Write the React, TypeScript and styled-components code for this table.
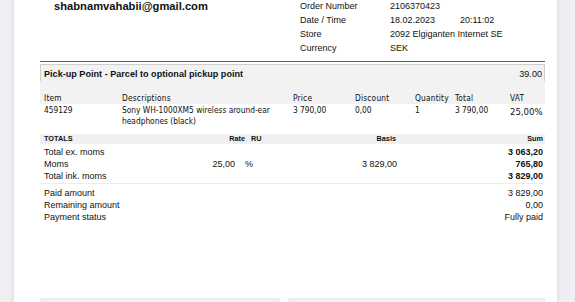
import React from "react";
import styled, { createGlobalStyle } from "styled-components";

const Global = createGlobalStyle`
  html, body { margin: 0; padding: 0; }
  body {
    background: #efeff3;
    font-family: "Liberation Sans", Arial, sans-serif;
    color: #111;
    overflow: hidden;
    height: 302px;
  }
`;

const Page = styled.div`
  margin-left: 14px;
  width: 543px;
  height: 302px;
  background: #fff;
  box-shadow: 0 0 5px rgba(0, 0, 0, 0.12);
  padding: 0 12px 0 26px;
  box-sizing: border-box;
  overflow: hidden;
`;

const Header = styled.div`
  display: flex;
  margin-top: -1px;
  padding-bottom: 6px;
  border-bottom: 1px solid #5e5e5e;
`;

const EmailCol = styled.div`
  width: 260px;
  padding-left: 14px;
  box-sizing: border-box;
  font-size: 11.2px;
  font-weight: bold;
  line-height: 14px;
`;

const InfoGrid = styled.div`
  display: grid;
  grid-template-columns: 90px auto;
  font-size: 9px;
  line-height: 14px;
`;

const DateVal = styled.span`
  display: inline-block;
  width: 70px;
`;

const GrayZone = styled.div`
  margin-top: 2px;
  background: #f2f2f2;
`;

const PickupBox = styled.div`
  height: 17px;
  border: 1px solid #cfcfcf;
  border-bottom: none;
  box-sizing: border-box;
  display: flex;
  align-items: center;
  justify-content: space-between;
  padding: 1px 2px 0 3px;
  font-size: 9.1px;
`;

const PickupTitle = styled.span`
  font-weight: bold;
`;

const ItemRow = styled.div<{ $head?: boolean }>`
  display: grid;
  grid-template-columns: 78px 171px 62px 60px 40px 55px 1fr;
  padding-left: 4px;
  padding-top: ${(p) => (p.$head ? "11px" : "1px")};
  font-family: "DejaVu Sans Condensed", "DejaVu Sans", sans-serif;
  font-stretch: condensed;
  font-size: 8.3px;
  line-height: ${(p) => (p.$head ? "12px" : "11px")};
  letter-spacing: ${(p) => (p.$head ? "0.2px" : "0")};
`;

const VatCell = styled.span`
  font-size: 9.5px;
  line-height: 12px;
  margin-top: 1px;
`;

const TotalsHead = styled.div`
  margin-top: 7px;
  height: 10px;
  background: #f0f0f0;
  display: grid;
  grid-template-columns: 130px 75px 30px 125px 1fr;
  font-size: 7.3px;
  font-weight: bold;
  line-height: 10px;
`;

const HCell = styled.span<{ $align?: string; $pad?: string }>`
  text-align: ${(p) => p.$align || "left"};
  padding: ${(p) => p.$pad || "0"};
`;

const TotalsBlock = styled.div<{ $sep?: boolean }>`
  padding-top: ${(p) => (p.$sep ? "4px" : "3px")};
  padding-bottom: ${(p) => (p.$sep ? "0" : "1px")};
  border-bottom: ${(p) => (p.$sep ? "none" : "1px solid #ececec")};
`;

const TotRow = styled.div`
  display: grid;
  grid-template-columns: 130px 75px 30px 125px 1fr;
  font-size: 9px;
  line-height: 11.8px;
`;

const Cell = styled.span<{ $align?: string; $pad?: string; $bold?: boolean }>`
  text-align: ${(p) => p.$align || "left"};
  padding: ${(p) => p.$pad || "0"};
  font-weight: ${(p) => (p.$bold ? "bold" : "normal")};
  white-space: nowrap;
`;

const Footer = styled.div`
  margin-top: 74px;
  display: grid;
  grid-template-columns: 240px 1fr;
  gap: 8px;
`;

const FootBox = styled.div`
  height: 20px;
  background: #f1f1f1;
  border: 1px solid #e9e9e9;
`;

const totals = [
  { label: "Total ex. moms", rate: "", ru: "", basis: "", sum: "3 063,20", bold: true },
  { label: "Moms", rate: "25,00", ru: "%", basis: "3 829,00", sum: "765,80", bold: true },
  { label: "Total ink. moms", rate: "", ru: "", basis: "", sum: "3 829,00", bold: true },
];

const payments = [
  { label: "Paid amount", sum: "3 829,00" },
  { label: "Remaining amount", sum: "0,00" },
  { label: "Payment status", sum: "Fully paid" },
];

export default function App() {
  return (
    <>
      <Global />
      <Page>
        <Header>
          <EmailCol>shabnamvahabii@gmail.com</EmailCol>
          <InfoGrid>
            <span>Order Number</span>
            <span>2106370423</span>
            <span>Date / Time</span>
            <span>
              <DateVal>18.02.2023</DateVal>20:11:02
            </span>
            <span>Store</span>
            <span>2092 Elgiganten Internet SE</span>
            <span>Currency</span>
            <span>SEK</span>
          </InfoGrid>
        </Header>
        <GrayZone>
          <PickupBox>
            <PickupTitle>Pick-up Point - Parcel to optional pickup point</PickupTitle>
            <span>39.00</span>
          </PickupBox>
          <ItemRow $head>
            <span>Item</span>
            <span>Descriptions</span>
            <span>Price</span>
            <span>Discount</span>
            <span>Quantity</span>
            <span>Total</span>
            <span>VAT</span>
          </ItemRow>
        </GrayZone>
        <ItemRow>
          <span>459129</span>
          <span>
            Sony WH-1000XM5 wireless around-ear
            <br />
            headphones (black)
          </span>
          <span>3 790,00</span>
          <span>0,00</span>
          <span>1</span>
          <span>3 790,00</span>
          <VatCell>25,00%</VatCell>
        </ItemRow>
        <TotalsHead>
          <HCell $pad="0 0 0 4px">TOTALS</HCell>
          <HCell $align="right">Rate</HCell>
          <HCell $pad="0 0 0 6px">RU</HCell>
          <HCell $align="right" $pad="0 4px 0 0">Basis</HCell>
          <HCell $align="right" $pad="0 2px 0 0">Sum</HCell>
        </TotalsHead>
        <TotalsBlock>
          {totals.map((t) => (
            <TotRow key={t.label}>
              <Cell $pad="0 0 0 4px">{t.label}</Cell>
              <Cell $align="right" $pad="0 10px 0 0">{t.rate}</Cell>
              <Cell>{t.ru}</Cell>
              <Cell $align="right" $pad="0 3px 0 0">{t.basis}</Cell>
              <Cell $align="right" $pad="0 2px 0 0" $bold={t.bold}>{t.sum}</Cell>
            </TotRow>
          ))}
        </TotalsBlock>
        <TotalsBlock $sep>
          {payments.map((t) => (
            <TotRow key={t.label}>
              <Cell $pad="0 0 0 4px">{t.label}</Cell>
              <Cell />
              <Cell />
              <Cell />
              <Cell $align="right" $pad="0 2px 0 0">{t.sum}</Cell>
            </TotRow>
          ))}
        </TotalsBlock>
        <Footer>
          <FootBox />
          <FootBox />
        </Footer>
      </Page>
    </>
  );
}
